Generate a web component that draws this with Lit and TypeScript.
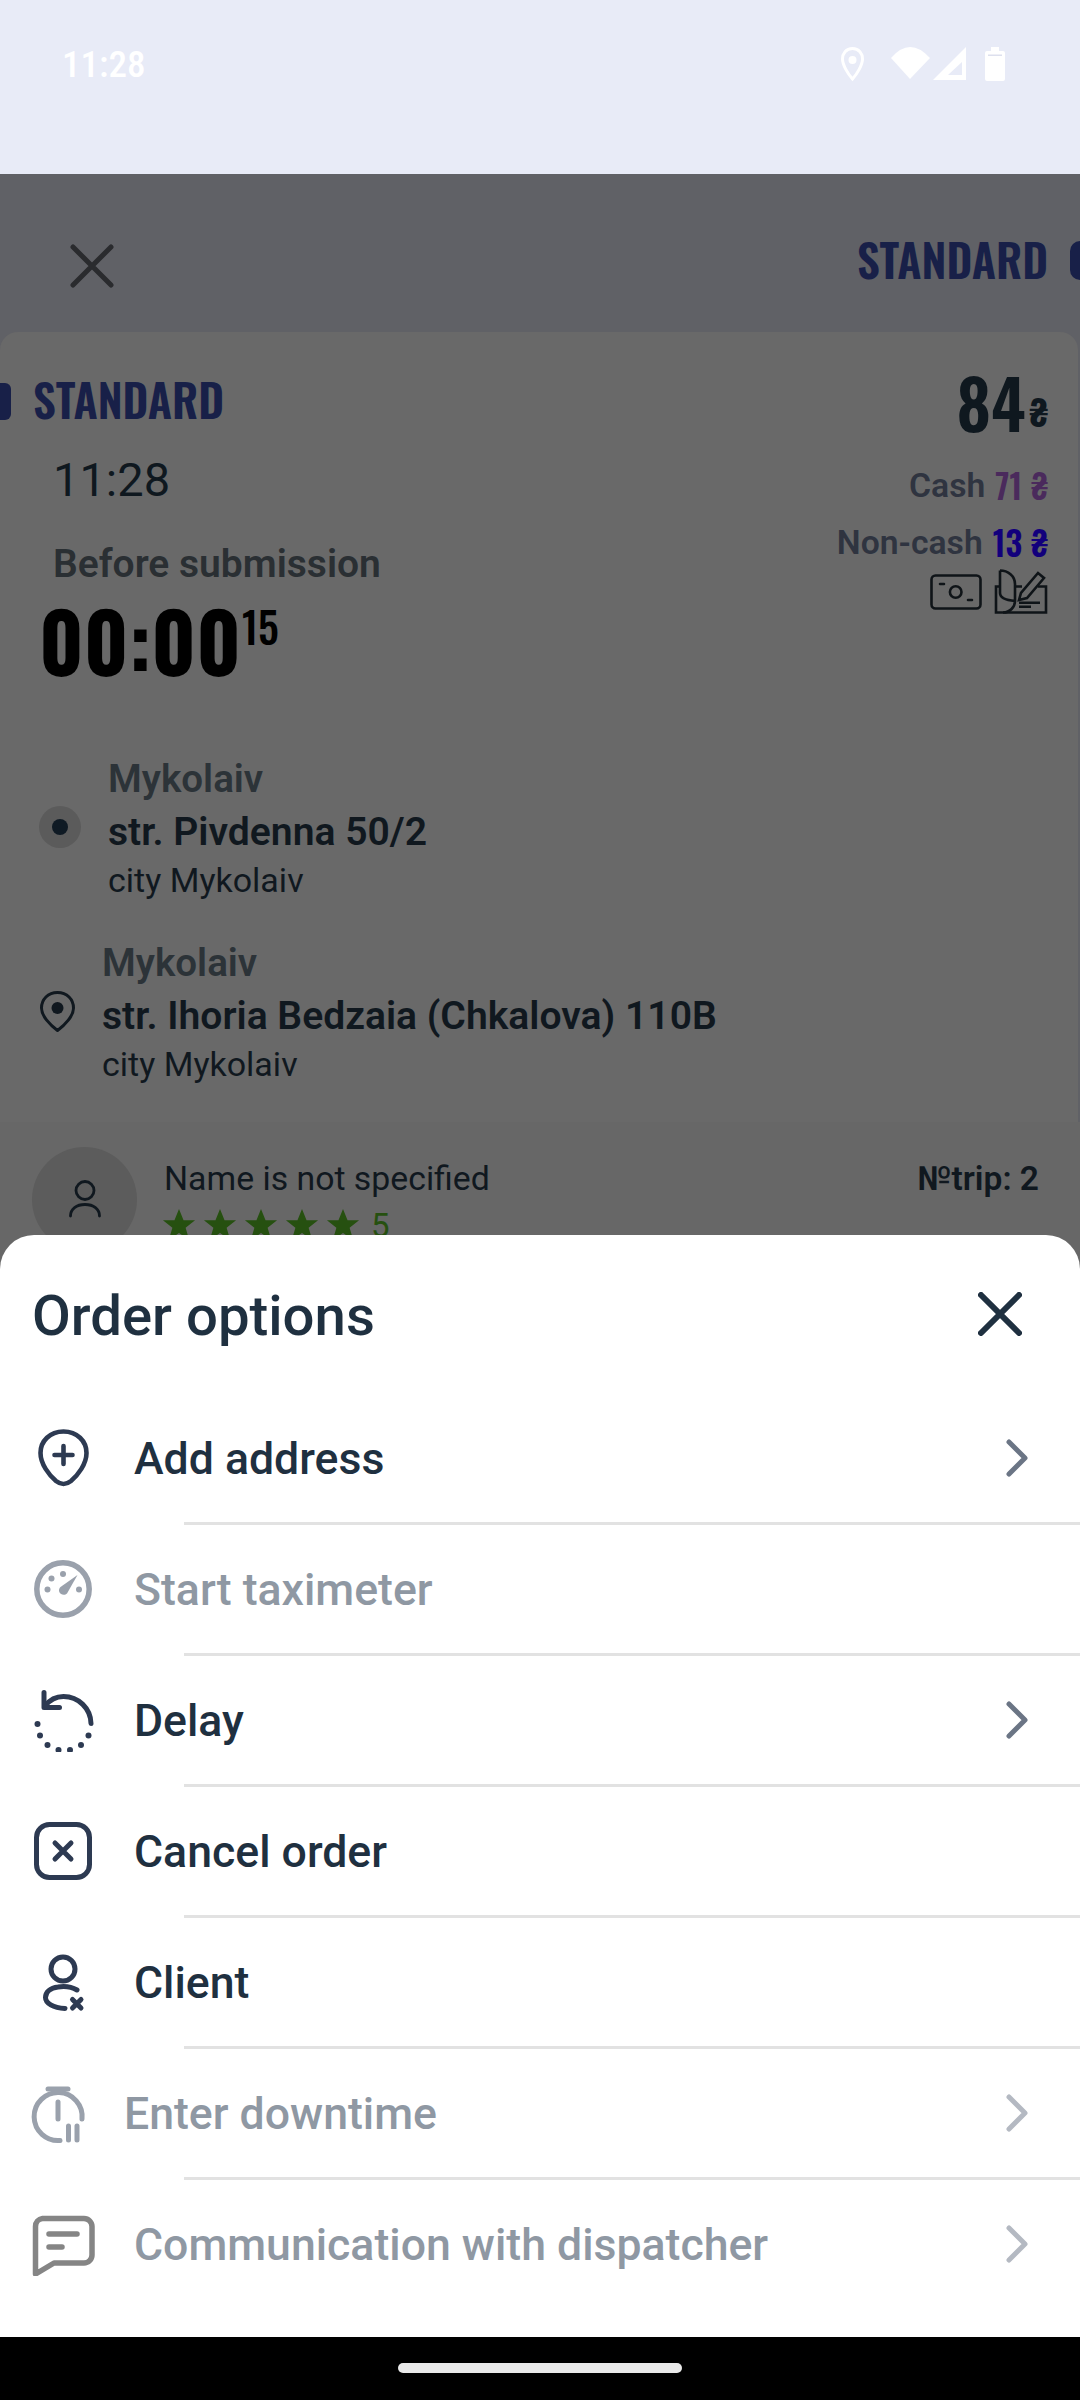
import { LitElement, html, css, svg } from "lit";
import { customElement } from "lit/decorators.js";

const dark = "#2d3a52";
const grey = "#9aa1ac";

const icons = {
  add: svg`<g fill="none" stroke="${dark}" stroke-width="4.6" stroke-linecap="round"><path d="M32.500 5.500C46 5.500 55.500 15 55.500 27 55.500 38 47 49 40 55 35 59 30 59 25 55 18 49 9.500 38 9.500 27 9.500 15 19 5.500 32.500 5.500Z"/><path d="M23.500 29H41.500M32.500 20V38"/></g>`,
  speed: svg`<g fill="none" stroke="${grey}" stroke-width="5.5"><circle cx="32" cy="32" r="26.2"/></g><g fill="${grey}"><circle cx="32" cy="17" r="3"/><circle cx="20.5" cy="21.5" r="3"/><circle cx="16.5" cy="32.5" r="3"/><circle cx="48" cy="32.5" r="3"/><path d="M46.500 18 36 36.500C33.500 39 28.500 37.500 28 34 27.800 32.500 28.500 31 29.500 30Z"/></g>`,
  delay: svg`<g fill="none" stroke="${dark}" stroke-width="5" stroke-linecap="round" stroke-linejoin="round"><path d="M60 35.500A27.500 27.500 0 0 0 32.500 8.500C25 8.500 19 11.500 14 18"/><path d="M13 4.500V19.500H28.500"/></g><g fill="${dark}"><circle cx="6.5" cy="36" r="3"/><circle cx="9" cy="47.5" r="3"/><circle cx="16.5" cy="57" r="3"/><circle cx="27.5" cy="62" r="3"/><circle cx="39" cy="62" r="3"/><circle cx="50" cy="57" r="3"/><circle cx="57.5" cy="47.5" r="3"/></g>`,
  cancel: svg`<g fill="none" stroke="${dark}" stroke-width="5" stroke-linecap="round"><rect x="5.5" y="5.5" width="53" height="53" rx="13"/><path d="M24 24 40 40M40 24 24 40"/></g>`,
  client: svg`<g fill="none" stroke="${dark}" stroke-width="5" stroke-linecap="round"><circle cx="32" cy="19" r="12"/><path d="M46 40C40 36.500 33 36 27 37 19 38 14.500 42 14.500 47.500 14.500 53 22 58 34 58.500"/><path d="M41.500 49.500 50 58M50 49.500 41.500 58"/></g>`,
  timer: svg`<g fill="none" stroke="${grey}" stroke-width="5" stroke-linecap="round"><path d="M51 38A24 24 0 1 0 29 59.500"/><path d="M17 8H37"/><path d="M27 21V38"/><path d="M37.500 45V59M46 45V59"/></g>`,
  chat: svg`<g fill="none" stroke="#858585" stroke-width="5.500" stroke-linecap="round" stroke-linejoin="round"><path d="M11.500 6.500H53A8 8 0 0 1 61 14.500V43A8 8 0 0 1 53 51H23L4.500 62V14.500A8 8 0 0 1 11.500 6.500Z"/><path d="M18 22H46M18 35H31"/></g>`,
};

const rows = [
  { icon: icons.add, label: "Add address", chevron: true },
  { icon: icons.speed, label: "Start taximeter", off: true },
  { icon: icons.delay, label: "Delay", chevron: true },
  { icon: icons.cancel, label: "Cancel order" },
  { icon: icons.client, label: "Client" },
  { icon: icons.timer, label: "Enter downtime", off: true, chevron: true, tight: true },
  { icon: icons.chat, label: "Communication with dispatcher", off: true, chevron: true, last: true },
];

@customElement("app-root")
export class AppRoot extends LitElement {
  static styles = css`
    :host {
      display: flex;
      flex-direction: column;
      position: relative;
      width: 1080px;
      height: 2400px;
      overflow: hidden;
      font-family: Roboto, "Noto Sans", sans-serif;
      background: #606166;
    }
    svg { display: block; flex: none; }
    .status {
      height: 174px;
      background: #e8ebf7;
      display: flex;
      justify-content: space-between;
      color: #fff;
      padding: 46px 74px 0 62px;
      box-sizing: border-box;
      flex: none;
    }
    .clock { font-size: 37px; font-stretch: 78%; font-weight: 500; line-height: 40px; margin-top: -1px; }
    .page { flex: 1; min-height: 0; overflow: hidden; }
    .topbar {
      height: 158px;
      display: flex;
      justify-content: space-between;
      align-items: flex-start;
      padding: 70px 0 0 70px;
      box-sizing: border-box;
    }
    .cond {
      font-family: Oswald, "Roboto Condensed", Roboto, sans-serif;
      font-weight: 600;
    }
    .brand { font-size: 45px; line-height: 44px; color: #182048; white-space: nowrap; }
    .tab { display: flex; align-items: flex-start; gap: 22px; margin-top: -7px; }
    .tabpill { width: 10px; height: 39px; margin-top: 4px; background: #182048; border-radius: 12px 0 0 12px; }
    .card {
      background: #696969;
      margin-right: 2px;
      border-radius: 18px 18px 0 0;
      height: 790px;
      box-sizing: border-box;
    }
    .head { display: flex; justify-content: space-between; }
    .left { padding-top: 45px; }
    .tag { display: flex; align-items: center; gap: 22px; height: 44px; }
    .tagpill { width: 11px; height: 37px; margin-top: 4px; background: #182048; border-radius: 0 6px 6px 0; }
    .time { font-size: 47px; line-height: 50px; color: #0f181f; margin: 34px 0 0 53px; }
    .before { font-size: 39px; line-height: 44px; font-weight: 600; color: #2a2f33; margin: 37px 0 0 53px; }
    .timer { display: flex; margin: 14px 0 0 39px; color: #000; height: 84px; }
    .big { font-size: 81.500px; line-height: 80px; font-weight: 700; }
    .sup { font-size: 42px; line-height: 40px; margin: 6px 0 0 1px; font-weight: 500; }
    .right {
      display: flex;
      flex-direction: column;
      align-items: flex-end;
      padding: 28px 30px 0 0;
    }
    .price { display: flex; align-items: flex-end; color: #0f181f; height: 82px; }
    .price .n { font-size: 67px; line-height: 80px; }
    .price .c { font-size: 36px; line-height: 44px; margin: 0 0 9px 4px; font-weight: 700; }
    .pay { display: flex; align-items: center; height: 44px; gap: 10px; font-size: 33.700px; font-weight: 600; color: #2f3440; }
    .pay .cond { font-size: 33px; word-spacing: 1px; }
    .cash { margin-top: 21px; }
    .card-pay { margin-top: 13px; }
    .cash .cond { color: #4a2a5c; }
    .card-pay .cond { color: #12007c; }
    .marks { display: flex; gap: 12px; align-items: center; height: 46px; margin-top: 5px; }
    .route { display: flex; align-items: center; }
    .first { margin-top: 70px; padding-left: 39px; gap: 27px; }
    .second { margin-top: 38px; padding-left: 40px; gap: 27px; }
    .radio { width: 42px; height: 42px; border-radius: 50%; background: #5b5b5b; display: flex; align-items: center; justify-content: center; }
    .dot { width: 16px; height: 16px; border-radius: 50%; background: #0f1a24; }
    .city { font-size: 38.600px; font-weight: 600; line-height: 50px; color: #2c3338; }
    .street { font-size: 39.100px; font-weight: 600; line-height: 56px; color: #10181f; }
    .note { font-size: 34px; line-height: 40px; color: #10181f; }
    .client {
      background: #676767;
      height: 200px;
      padding: 25px 41px 0 32px;
      display: flex;
      gap: 27px;
    }
    .avatar { width: 105px; height: 105px; border-radius: 50%; background: #5c5c5c; display: flex; align-items: center; justify-content: center; flex: none; }
    .who { flex: 1; }
    .name { font-size: 33.800px; line-height: 40px; margin-top: 12px; color: #10181f; }
    .stars { display: flex; align-items: center; gap: 7px; margin-top: 8px; height: 36px; margin-left: -2px; color: #265010; }
    .stars span { font-size: 33px; margin-left: 4px; }
    .trip { font-size: 33.500px; font-weight: 600; line-height: 40px; margin-top: 12px; color: #10181f; }
    .sheet {
      position: absolute;
      left: 0;
      right: 0;
      top: 1235px;
      height: 1102px;
      background: #fff;
      border-radius: 34px 34px 0 0;
    }
    .sheet-head {
      height: 159px;
      box-sizing: border-box;
      padding: 57px 58px 0 32px;
      display: flex;
      justify-content: space-between;
      align-items: flex-start;
      color: #1f3040;
    }
    .title { font-size: 56.300px; font-weight: 470; line-height: 48px; }
    .row { height: 128px; display: flex; align-items: center; padding: 0 52px 0 31px; font-size: 44.600px; font-weight: 470; color: #1f3040; }
    .row.off { color: #8f98a3; }
    .lbl { flex: 1; margin-left: 39px; padding-top: 1px; }
    .tight .lbl { margin-left: 29px; }
    .rule { height: 3px; margin-left: 184px; background: #e2e2e2; }
    .nav { height: 63px; background: #000; flex: none; display: flex; justify-content: center; align-items: flex-start; position: relative; z-index: 1; }
    .home { width: 284px; height: 10px; margin-top: 26px; background: #eaeaea; border-radius: 5px; }
  `;

  private star() {
    return html`<svg width="34" height="34" viewBox="0 0 36 36"><path fill="#265010" d="M18 1l4.800 12H35l-10 8 3.800 13L18 26.500 7.200 34 11 21 1 13h12.200z"/></svg>`;
  }

  render() {
    return html`
      <div class="status">
        <div class="clock">11:28</div>
        <svg width="166" height="36" viewBox="0 0 166 36" fill="#fff">
          <path fill="none" stroke="#fff" stroke-width="3" d="M12.500 2.500C6 2.500 2.500 7.500 2.500 13 2.500 19 8 28 12.500 33 17 28 22.500 19 22.500 13 22.500 7.500 19 2.500 12.500 2.500Z"/>
          <circle cx="12.500" cy="14" r="4"/>
          <path d="M51 12Q70-10 90 12L70 33Z"/>
          <path fill-rule="evenodd" d="M93 34 126 1V34ZM108 29H122V16Z"/>
          <path d="M151 1h8v4h4a2 2 0 0 1 2 2v26a2 2 0 0 1-2 2h-16a2 2 0 0 1-2-2V7a2 2 0 0 1 2-2h4z"/>
          <rect x="148" y="8.500" width="14" height="1.500" fill="#dde0ee"/>
        </svg>
      </div>
      <div class="page">
        <div class="topbar">
          <svg width="44" height="44" viewBox="0 0 44 44"><path fill="none" stroke="#2a2b2e" stroke-width="5" stroke-linecap="round" d="M3 3 41 41M41 3 3 41"/></svg>
          <div class="tab"><span class="cond brand">STANDARD</span><div class="tabpill"></div></div>
        </div>
        <div class="card">
          <div class="head">
            <div class="left">
              <div class="tag"><div class="tagpill"></div><span class="cond brand">STANDARD</span></div>
              <div class="time">11:28</div>
              <div class="before">Before submission</div>
              <div class="timer"><span class="cond big">00:00</span><span class="cond sup">15</span></div>
            </div>
            <div class="right">
              <div class="price"><span class="cond n">84</span><span class="cond c">₴</span></div>
              <div class="pay cash">Cash <span class="cond">71 ₴</span></div>
              <div class="pay card-pay">Non-cash <span class="cond">13 ₴</span></div>
              <div class="marks">
                <svg width="52" height="36" viewBox="0 0 52 36" fill="none" stroke="#0f1418" stroke-width="2.600" stroke-linecap="round"><rect x="1.500" y="1.500" width="49" height="33" rx="4"/><circle cx="25.700" cy="18" r="5.800"/><path d="M10 10H14M38 26H42"/></svg>
                <svg width="54" height="46" viewBox="0 0 54 46" fill="none" stroke="#0f1418" stroke-width="2.600"><path d="M6 1.500C14 1.500 21 7 21 15V32C21 38 16 43.500 9 43.500M6 1.500V24C6 28 10 31 21 32"/><path d="M6 17.500H2V43.500H52V17.500H44M21 17.500H28"/><path d="M25 31 27 24 44 4 50 9 33 29Z"/><path d="M25 33.700H46M25 37.700H37"/></svg>
              </div>
            </div>
          </div>
          <div class="route first">
            <div class="radio"><div class="dot"></div></div>
            <div><div class="city">Mykolaiv</div><div class="street">str. Pivdenna 50/2</div><div class="note">city Mykolaiv</div></div>
          </div>
          <div class="route second">
            <svg width="35" height="41" viewBox="0 0 35 41"><path fill="none" stroke="#10181f" stroke-width="3" d="M17.500 1.500C8 1.500 1.500 8.500 1.500 17 1.500 25 10 34 17.500 39.500 25 34 33.500 25 33.500 17 33.500 8.500 27 1.500 17.500 1.500Z"/><circle cx="17.500" cy="17" r="6" fill="#10181f"/></svg>
            <div><div class="city">Mykolaiv</div><div class="street">str. Ihoria Bedzaia (Chkalova) 110B</div><div class="note">city Mykolaiv</div></div>
          </div>
        </div>
        <div class="client">
          <div class="avatar"><svg width="36" height="40" viewBox="0 0 36 40" fill="none" stroke="#10181f" stroke-width="2.800" stroke-linecap="round"><circle cx="18" cy="10.500" r="9"/><path d="M3.500 36C3.500 29 9.500 24.500 18 24.500S32.500 29 32.500 36"/></svg></div>
          <div class="who">
            <div class="name">Name is not specified</div>
            <div class="stars">${[1, 2, 3, 4, 5].map(() => this.star())}<span>5</span></div>
          </div>
          <div class="trip">№trip: 2</div>
        </div>
      </div>
      <div class="sheet">
        <div class="sheet-head">
          <div class="title">Order options</div>
          <svg width="44" height="44" viewBox="0 0 44 44"><path fill="none" stroke="#1f3040" stroke-width="6" stroke-linecap="round" d="M3 3 41 41M41 3 3 41"/></svg>
        </div>
        ${rows.map(
          (r) => html`
            <div class="row ${r.off ? "off" : ""} ${r.tight ? "tight" : ""}">
              <svg width="64" height="64" viewBox="0 0 64 64">${r.icon}</svg>
              <div class="lbl">${r.label}</div>
              ${r.chevron
                ? html`<svg width="22" height="38" viewBox="0 0 22 38"><path fill="none" stroke="${r.off ? "#b4b9c2" : "#6b7585"}" stroke-width="5" stroke-linecap="round" stroke-linejoin="round" d="M3 3 19 19 3 35"/></svg>`
                : ""}
            </div>
            ${r.last ? "" : html`<div class="rule"></div>`}
          `
        )}
      </div>
      <div class="nav"><div class="home"></div></div>
    `;
  }
}
